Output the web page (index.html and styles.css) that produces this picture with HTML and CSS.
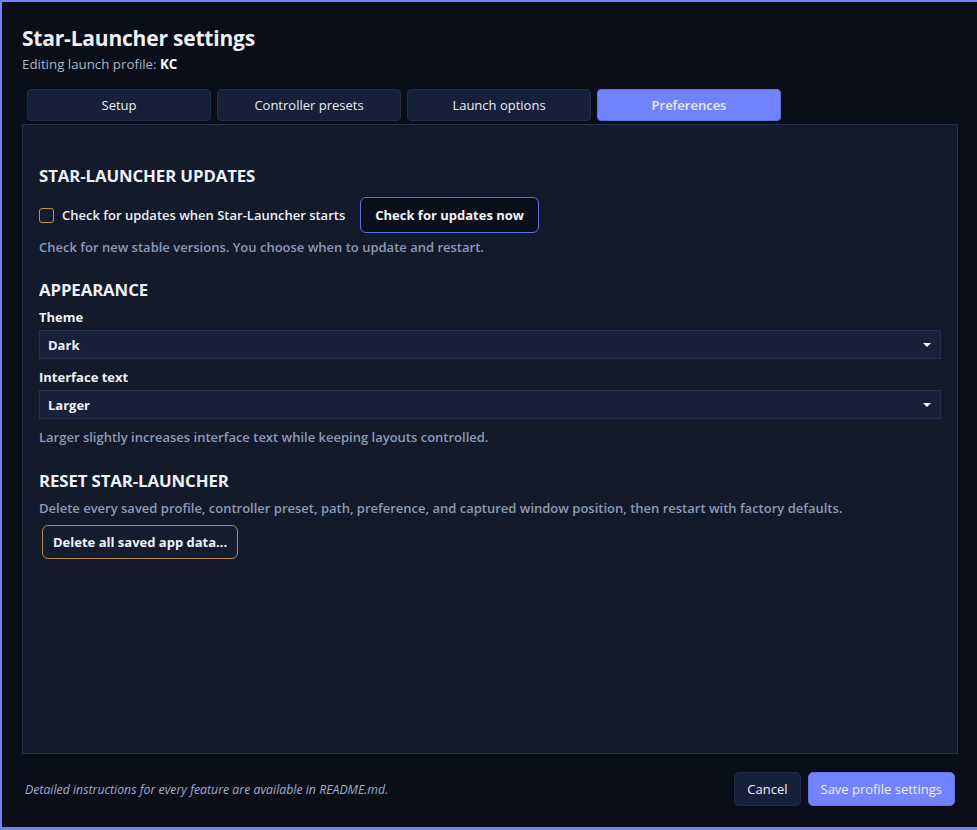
FILE: index.html
```html
<!DOCTYPE html>
<html lang="en">
<head>
  <meta charset="UTF-8">
  <title>Star-Launcher settings</title>
  <link rel="stylesheet" href="styles.css">
</head>
<body>
  <div class="window">
    <div class="header">
      <h1>Star-Launcher settings</h1>
      <div class="subtitle">Editing launch profile: <b>KC</b></div>
    </div>

    <div class="tabs">
      <button class="tab">Setup</button>
      <button class="tab">Controller presets</button>
      <button class="tab">Launch options</button>
      <button class="tab active">Preferences</button>
    </div>

    <div class="panel">
      <h2>STAR-LAUNCHER UPDATES</h2>
      <div class="update-row">
        <label class="check"><span class="box"></span>Check for updates when Star-Launcher starts</label>
        <button class="btn-outline">Check for updates now</button>
      </div>
      <p class="hint">Check for new stable versions. You choose when to update and restart.</p>

      <h2>APPEARANCE</h2>
      <div class="field-label">Theme</div>
      <div class="select">Dark<span class="caret"></span></div>
      <div class="field-label">Interface text</div>
      <div class="select">Larger<span class="caret"></span></div>
      <p class="hint">Larger slightly increases interface text while keeping layouts controlled.</p>

      <h2>RESET STAR-LAUNCHER</h2>
      <p class="hint tight">Delete every saved profile, controller preset, path, preference, and captured window position, then restart with factory defaults.</p>
      <button class="btn-danger">Delete all saved app data...</button>
    </div>

    <div class="footer">
      <span class="note">Detailed instructions for every feature are available in README.md.</span>
      <div class="actions">
        <button class="btn-cancel">Cancel</button>
        <button class="btn-save">Save profile settings</button>
      </div>
    </div>
  </div>
</body>
</html>
```

FILE: styles.css
```css
* {
  box-sizing: border-box;
}
html, body {
  margin: 0;
  height: 100%;
  background: #0a0e19;
}
body {
  font-family: 'Open Sans', 'Noto Sans', sans-serif;
  color: #eef1f8;
  overflow: hidden;
}
button {
  font-family: inherit;
  cursor: pointer;
}
.window {
  height: 830px;
  border: 3px solid #7383ff;
  border-left-width: 2px;
  border-right: none;
  border-top-width: 2px;
  display: flex;
  flex-direction: column;
  padding: 0 19px 0 20px;
}
.header {
  padding-top: 22px;
}
h1 {
  margin: 0;
  font-size: 21px;
  font-weight: 700;
  line-height: 28px;
  letter-spacing: -0.2px;
}
.subtitle {
  font-size: 13.3px;
  color: #aab4c8;
  margin-top: 3px;
}
.subtitle b {
  color: #ffffff;
}
.tabs {
  display: flex;
  gap: 6px;
  padding-left: 5px;
  margin-top: 16px;
}
.tab {
  width: 184px;
  height: 32px;
  background: #17203a;
  border: 1px solid #232d47;
  border-radius: 4px;
  color: #e8ecf6;
  font-size: 13px;
}
.tab.active {
  background: #7082fd;
  border-color: #5d6fe6;
  font-weight: 600;
}
.panel {
  flex: 1;
  margin-top: 3px;
  background: #121a2b;
  border: 1px solid #27324c;
  padding: 39px 16px 0 16px;
}
h2 {
  margin: 0 0 6px;
  font-size: 16.8px;
  font-weight: 700;
  line-height: 24px;
  letter-spacing: -0.1px;
}
.update-row {
  display: flex;
  align-items: center;
  gap: 15px;
  margin-top: 9px;
}
.check {
  display: flex;
  align-items: center;
  gap: 8px;
  font-size: 13px;
  font-weight: 600;
}
.box {
  width: 15px;
  height: 15px;
  border: 1px solid #c98f3c;
  border-radius: 3px;
  background: #161c2a;
}
.btn-outline {
  height: 36px;
  padding: 0 14px;
  background: #0b0f1b;
  border: 1px solid #6070e0;
  border-radius: 6px;
  color: #f2f4fa;
  font-size: 13px;
  font-weight: 700;
}
.hint {
  margin: 5px 0 22px;
  font-size: 13px;
  font-weight: 600;
  color: #8d9ab7;
  line-height: 18px;
}
.hint.tight {
  margin: 3px 0 8px;
}
.field-label {
  font-size: 13px;
  font-weight: 700;
  margin: 0 0 4px;
  line-height: 18px;
}
.select {
  height: 29px;
  background: #18213a;
  border: 1px solid #253050;
  display: flex;
  align-items: center;
  padding: 0 8px;
  font-size: 13px;
  font-weight: 700;
  position: relative;
  margin-bottom: 9px;
}
.caret {
  position: absolute;
  right: 9px;
  top: 12px;
  border-left: 4px solid transparent;
  border-right: 4px solid transparent;
  border-top: 4px solid #ffffff;
}
.select + .hint {
  margin-top: 9px;
  margin-bottom: 23px;
}
.btn-danger {
  margin-left: 3px;
  height: 34px;
  padding: 0 10px;
  background: #141c30;
  border: 1px solid #b98a4c;
  border-radius: 6px;
  color: #f2f4fa;
  font-size: 13px;
  font-weight: 700;
}
.footer {
  display: flex;
  align-items: center;
  justify-content: space-between;
  padding: 18px 3px 21px 3px;
}
.note {
  font-size: 12.3px;
  font-style: italic;
  color: #9dadd0;
}
.actions {
  display: flex;
  gap: 7px;
}
.btn-cancel {
  height: 34px;
  padding: 0 12px;
  background: #17203a;
  border: 1px solid #212b45;
  border-radius: 5px;
  color: #eef1f8;
  font-size: 13px;
}
.btn-save {
  height: 34px;
  padding: 0 12px;
  background: #7383ff;
  border: 1px solid #6373ea;
  border-radius: 5px;
  color: #eef1fc;
  font-size: 13px;
}
```
